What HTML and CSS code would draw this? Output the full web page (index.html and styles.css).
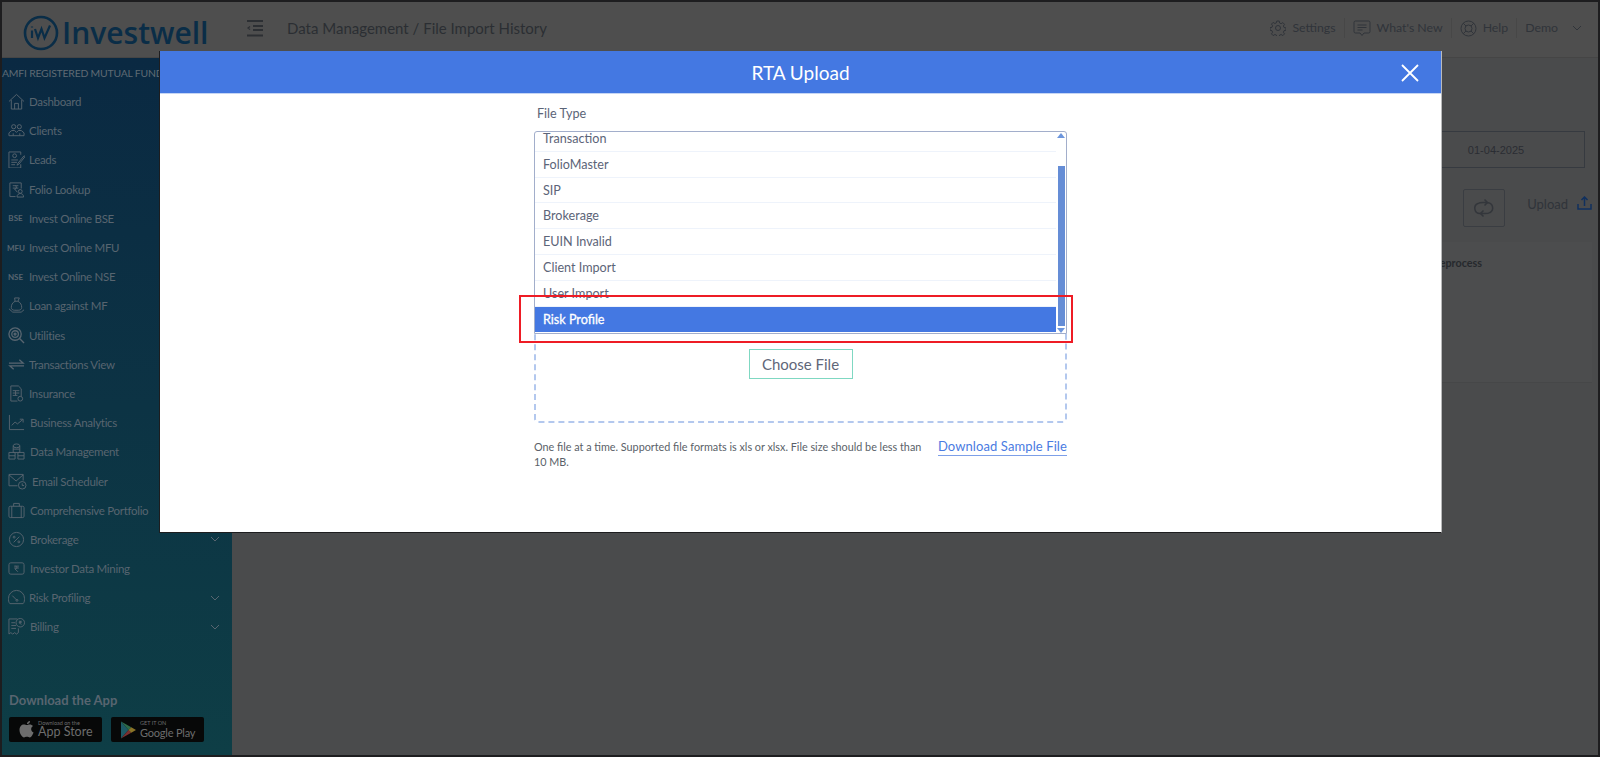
FILE: index.html
```html
<!DOCTYPE html>
<html lang="en">
<head>
  <meta charset="UTF-8" />
  <meta name="viewport" content="width=device-width, initial-scale=1" />
  <title>Investwell - File Import History</title>
  <link rel="stylesheet" href="styles.css">
</head>
<body>

  <div class="app">
    <header class="topbar">
      <div class="brand">
        <svg class="brand-mark" width="36" height="36" viewBox="0 0 36 36" fill="none" stroke="currentColor">
          <circle cx="18" cy="18" r="16" stroke-width="2.6"/>
          <path d="M9 15.500v7.500M9 11.500v1M12 14l3 9 3.500-9 3 9 5.500-12.500" stroke-width="2.200"/>
        </svg>
        <span class="brand-name">Investwell</span>
      </div>
      <svg class="menu-toggle" width="18" height="18" viewBox="0 0 18 18" fill="none" stroke="currentColor" stroke-width="2">
        <path d="M1 2h16M7 7h10M7 11h10M1 16.500h16"/>
        <path d="M4 7.500 2 9l2 1.500" stroke-width="1.200"/>
      </svg>
      <div class="crumbs">Data Management / File Import History</div>

      <nav class="top-links">
        <a class="top-link">
          <svg width="16" height="16" viewBox="0 0 16 16" fill="none" stroke="currentColor">
            <circle cx="8" cy="8" r="2.500"/>
            <path d="M6.800 1h2.400l.4 2 1.500.7 1.800-1.100 1.600 1.700-1.100 1.700.6 1.500 2 .4v2.300l-2 .5-.6 1.500 1.100 1.700-1.600 1.700-1.800-1.100-1.500.6-.4 2H6.800l-.4-2-1.500-.6-1.800 1.100-1.600-1.700 1.100-1.700-.6-1.500-2-.5V7.700l2-.4.6-1.500-1.100-1.700 1.600-1.700 1.800 1.100 1.500-.7z"/>
          </svg>
          Settings
        </a>
        <a class="top-link">
          <svg width="18" height="17" viewBox="0 0 18 17" fill="none" stroke="currentColor">
            <path d="M2.500 1h13A1.500 1.500 0 0 1 17 2.500v9a1.500 1.500 0 0 1-1.500 1.500H11l-2 2.500L7 13H2.500A1.500 1.500 0 0 1 1 11.500v-9A1.500 1.500 0 0 1 2.500 1z"/>
            <path d="M4.500 5h9M4.500 7.500h9M4.500 10h5"/>
          </svg>
          What's New
        </a>
        <a class="top-link">
          <svg width="17" height="17" viewBox="0 0 17 17" fill="none" stroke="currentColor">
            <circle cx="8.500" cy="8.500" r="7.500"/>
            <circle cx="8.500" cy="8.500" r="3.500"/>
            <path d="M3.200 3.200 6 6M13.800 3.200 11 6M3.200 13.800 6 11M13.800 13.800 11 11"/>
          </svg>
          Help
        </a>
        <a class="top-link">Demo</a>
        <svg class="top-caret" width="10" height="6" viewBox="0 0 10 6" fill="none" stroke="currentColor">
          <path d="m1 1 4 4 4-4"/>
        </svg>
      </nav>
    </header>

    <div class="below">
      <aside class="sidebar">
        <div class="amfi">AMFI REGISTERED MUTUAL FUND</div>
        <ul class="nav">
          <li class="nav-item">
            <svg class="nav-icon" viewBox="0 0 18 18"><path d="M1 9 9 1.500 17 9M3.500 7.500V17h11V7.500M7 17v-6h4v6"/></svg>
            <span>Dashboard</span>
          </li>
          <li class="nav-item">
            <svg class="nav-icon" viewBox="0 0 18 18"><circle cx="6" cy="5" r="2.200"/><circle cx="12" cy="5" r="2.200"/><path d="M1 14.500v-3l3-2.500h3l2 2 2-2h3l3 2.500v3zM5.500 14.500V12M12.500 14.500V12"/></svg>
            <span>Clients</span>
          </li>
          <li class="nav-item">
            <svg class="nav-icon" viewBox="0 0 18 18"><path d="M13.500 4V1H1v17h12.500v-4"/><circle cx="7" cy="5" r="2"/><path d="M3.500 9.500h7M3.500 12h6M3.500 14.500h4M17 5l-6.500 8-1 2 2-1L18 6z"/></svg>
            <span>Leads</span>
          </li>
          <li class="nav-item">
            <svg class="nav-icon" viewBox="0 0 18 18"><path d="M8 16.500H2V2h12v6"/><path d="M5 5h6M5 7.500h6M7.500 5c2 0 2 3.500-.5 3.500L10 12"/><circle cx="13" cy="11" r="2"/><path d="M9.500 17c0-5 7-5 7 0z"/></svg>
            <span>Folio Lookup</span>
          </li>
          <li class="nav-item"><span class="nav-tag">BSE</span><span>Invest Online BSE</span></li>
          <li class="nav-item"><span class="nav-tag">MFU</span><span>Invest Online MFU</span></li>
          <li class="nav-item"><span class="nav-tag">NSE</span><span>Invest Online NSE</span></li>
          <li class="nav-item">
            <svg class="nav-icon" viewBox="0 0 18 18"><path d="M7 1h5l-1.500 3.500c3 1.500 4 4 4 6.500 0 2-1.500 3-3.500 3H7c-2 0-3.500-1-3.500-3 0-2.500 1-5 4-6.500zM1 12.500 5 16h9l3-2.500M7.500 4.500h3"/></svg>
            <span>Loan against MF</span>
          </li>
          <li class="nav-item">
            <svg class="nav-icon nav-icon-bold" viewBox="0 0 18 18"><circle cx="7.500" cy="7.500" r="6.500"/><circle cx="7.500" cy="7.500" r="3.500"/><circle cx="7.500" cy="7.500" r="1"/><path d="m12 12 5 5"/></svg>
            <span>Utilities</span>
          </li>
          <li class="nav-item">
            <svg class="nav-icon nav-icon-bold" viewBox="0 0 18 18"><path d="M1 7.500h15L12 4M17 10.500H2l4 3.500"/></svg>
            <span>Transactions View</span>
          </li>
          <li class="nav-item">
            <svg class="nav-icon" viewBox="0 0 18 18"><path d="M10 17H3V1h8l3 3v8M5 6h7M5 8.500h7M5 11h5M8 6v5"/><circle cx="13" cy="14.500" r="2.500"/></svg>
            <span>Insurance</span>
          </li>
          <li class="nav-item nav-item-wide">
            <svg class="nav-icon" viewBox="0 0 18 18"><path d="M1.500 1v15.500H17M4 12l3.500-3.500 2.500 2L15.500 6M12.500 5.500h3.500V9"/></svg>
            <span>Business Analytics</span>
          </li>
          <li class="nav-item nav-item-wide">
            <svg class="nav-icon" viewBox="0 0 18 18"><ellipse cx="9" cy="3" rx="3.500" ry="2"/><path d="M5.500 3v7h7V3M5.500 6.500h7M1 10h6.500v7H1zM10.500 10H17v7h-6.500zM1 13.500h6.500M10.500 13.500H17"/></svg>
            <span>Data Management</span>
          </li>
          <li class="nav-item nav-item-mail">
            <svg class="nav-icon nav-icon-mail" viewBox="0 0 20 18"><path d="M10 13.500H1V1.500h15V8M1 2l7.500 6.500L16 2"/><circle cx="15" cy="13" r="4"/><path d="M15 11v2.300h2"/></svg>
            <span>Email Scheduler</span>
          </li>
          <li class="nav-item nav-item-wide">
            <svg class="nav-icon" viewBox="0 0 18 18"><rect x="1" y="4.500" width="16" height="12" rx="1.500"/><path d="M6 4.500v-3h6v3M4 4.500v12M14 4.500v12"/></svg>
            <span>Comprehensive Portfolio</span>
          </li>
          <li class="nav-item nav-item-wide">
            <svg class="nav-icon" viewBox="0 0 18 18"><circle cx="9" cy="9" r="7.500"/><path d="m6 12 6-6"/><circle cx="6.500" cy="6.500" r="1"/><circle cx="11.500" cy="11.500" r="1"/></svg>
            <span>Brokerage</span>
            <svg class="nav-caret" width="10" height="6" viewBox="0 0 10 6"><path d="m1 1 4 4 4-4"/></svg>
          </li>
          <li class="nav-item nav-item-wide">
            <svg class="nav-icon" viewBox="0 0 18 18"><rect x="1" y="3" width="16" height="12" rx="2"/><path d="M6.500 6.500h5M6.500 8.500h5M8 6.500c2 0 2 3-.5 3l3 3"/></svg>
            <span>Investor Data Mining</span>
          </li>
          <li class="nav-item">
            <svg class="nav-icon" viewBox="0 0 18 18"><path d="M2 15.500C.5 14 .5 11.500.5 10a8.500 8.500 0 0 1 17 0c0 1.500 0 4-1.500 5.500zM4.500 7 9 11.500"/><circle cx="9.500" cy="12" r="1"/></svg>
            <span>Risk Profiling</span>
            <svg class="nav-caret" width="10" height="6" viewBox="0 0 10 6"><path d="m1 1 4 4 4-4"/></svg>
          </li>
          <li class="nav-item nav-item-wide">
            <svg class="nav-icon" viewBox="0 0 18 18"><path d="M10 1H1v16l2-1.500 2 1.500 2-1.500 2 1.500 2-1.500V11M3.500 5h4M3.500 8h5M3.500 11h5"/><circle cx="13" cy="5" r="4.500"/><path d="M11.500 3.500h3M11.500 5h3M12.500 3.500c1.500 0 1.500 1.500-.5 1.500l2 2"/></svg>
            <span>Billing</span>
            <svg class="nav-caret" width="10" height="6" viewBox="0 0 10 6"><path d="m1 1 4 4 4-4"/></svg>
          </li>
        </ul>

        <div class="apps">
          <div class="apps-title">Download the App</div>
          <div class="apps-row">
            <div class="store">
              <svg width="15" height="17" viewBox="0 0 15 17" fill="currentColor">
                <path d="M11 0c.1 1.800-1.500 3.300-3.100 3.100C7.800 1.500 9.400.1 11 0zM7.800 4.100c.8 0 1.700-.7 3-.7 1.300 0 2.500.6 3.200 1.700-2.700 1.600-2.300 5.300.6 6.500-.8 2-2.200 4.900-3.800 4.900-1.100 0-1.500-.7-2.900-.7-1.400 0-1.900.7-2.900.7C3.200 16.500.5 12.500.5 9c0-3.500 2.200-5.500 4.300-5.500 1.200 0 2.300.6 3 .6z"/>
              </svg>
              <div class="store-text"><small>Download on the</small><b>App Store</b></div>
            </div>
            <div class="store store-play">
              <svg width="15" height="18" viewBox="0 0 16 18">
                <path d="M0 0v18l8-9z" fill="#1d5a66"/>
                <path d="M0 0l8 9 3-3z" fill="#2d6a48"/>
                <path d="M0 18l8-9 3 3z" fill="#7a3030"/>
                <path d="M11 6l5 3-5 3-3-3z" fill="#8a7428"/>
              </svg>
              <div class="store-text"><small>GET IT ON</small><b>Google Play</b></div>
            </div>
          </div>
        </div>
      </aside>

      <main class="content">
        <div class="date-box">01-04-2025</div>
        <div class="actions">
          <div class="sync-btn">
            <svg width="22" height="20" viewBox="0 0 22 20" fill="none" stroke="currentColor" stroke-width="1.500">
              <path d="M8 15.500H7A5.200 5.200 0 0 1 5 5.500C7 4 10 4.500 14 4.500M11.500 1.500l3 3-3 3"/>
              <path d="M14 4.800h1a5.200 5.200 0 0 1 2 9.700c-2 1.500-5 1-9 1M10.500 12.500l-3 3 3 3"/>
            </svg>
          </div>
          <div class="upload">
            Upload
            <svg width="15" height="14" viewBox="0 0 15 14" fill="none" stroke="currentColor" stroke-width="1.500">
              <path d="M1 8v5h13V8M7.500 10V1M4.500 4l3-3 3 3"/>
            </svg>
          </div>
        </div>
        <div class="panel">
          <div class="panel-head">Reprocess</div>
        </div>
      </main>
    </div>
  </div>

  <div class="overlay">
    <section class="modal">
      <div class="modal-head">
        RTA Upload
        <svg class="modal-close" width="18" height="18" viewBox="0 0 18 18" fill="none" stroke="#fff" stroke-width="1.800">
          <path d="m1 1 16 16M17 1 1 17"/>
        </svg>
      </div>
      <div class="modal-body">
        <label class="field-label">File Type</label>
        <div class="dropzone">
          <div class="picker">
            <ul class="picker-list">
              <li>Transaction</li>
              <li>FolioMaster</li>
              <li>SIP</li>
              <li>Brokerage</li>
              <li>EUIN Invalid</li>
              <li>Client Import</li>
              <li>User Import</li>
              <li class="selected">Risk Profile</li>
            </ul>
            <div class="picker-scroll">
              <span class="arrow-up"></span>
              <span class="thumb"></span>
              <span class="arrow-down"></span>
            </div>
          </div>
          <button class="choose-btn" type="button">Choose File</button>
        </div>
        <div class="help-row">
          <p class="help-text">One file at a time. Supported file formats is xls or xlsx. File size should be less than 10 MB.</p>
          <a class="sample-link">Download Sample File</a>
        </div>
      </div>
    </section>
    <div class="callout"></div>
  </div>

</body>
</html>
```

FILE: styles.css
```css
/* Reset */
* {
  margin: 0;
  padding: 0;
  box-sizing: border-box;
}
html, body {
  height: 757px;
  overflow: hidden;
}
body {
  background: #4a4b4c;
  font-family: Lato, 'Open Sans', sans-serif;
  color: #2f3338;
}
ul {
  list-style: none;
}
.app {
  height: 757px;
  display: flex;
  flex-direction: column;
  border: 2px solid #1d1d1f;
}

/* Top bar */
.topbar {
  height: 56px;
  flex: none;
  display: flex;
  align-items: center;
  background: #4e4e4e;
  border-bottom: 1px solid #454545;
}
.brand {
  width: 230px;
  margin-top: 6px;
  padding-left: 21px;
  display: flex;
  align-items: center;
  color: #0a2d47;
}
.brand-mark {
  flex: none;
}
.brand-name {
  font-family: 'Open Sans', Lato, sans-serif;
  font-size: 30px;
  font-weight: 600;
  line-height: 36px;
  margin-left: 3px;
}
.menu-toggle {
  margin: 0 0 3px 14px;
  color: #2c2f33;
}
.crumbs {
  margin: 0 0 3px 23px;
  font-size: 15px;
  color: #2b2e33;
}
.top-links {
  margin: 0 0 3px auto;
  display: flex;
  align-items: center;
  padding-right: 16px;
}
.top-link {
  display: flex;
  align-items: center;
  gap: 6px;
  font-size: 12.300px;
  color: #30343a;
  padding: 0 8px;
  border-right: 1px solid #474747;
  line-height: 20px;
}
.top-link:nth-child(4) {
  border-right: none;
}
.top-caret {
  margin-left: 6px;
  color: #30343a;
}

/* Sidebar */
.below {
  flex: 1;
  display: flex;
  min-height: 0;
}
.sidebar {
  width: 230px;
  flex: none;
  background: linear-gradient(180deg, #0a2942 0%, #0c3344 50%, #0e3e46 100%);
  color: #586570;
  display: flex;
  flex-direction: column;
}
.amfi {
  font-size: 10.400px;
  letter-spacing: -0.2px;
  line-height: 14px;
  margin-top: 8px;
  white-space: nowrap;
  color: #5f6b74;
}
.nav {
  margin-top: 7px;
}
.nav-item {
  height: 29.200px;
  display: flex;
  align-items: center;
  padding: 0 12px 0 6px;
  font-size: 11.500px;
  letter-spacing: -0.3px;
  white-space: nowrap;
}
.nav-item > span:not(.nav-tag) {
  margin-left: 4px;
}
.nav-item-wide > span:not(.nav-tag) {
  margin-left: 5px;
}
.nav-item-mail > span:not(.nav-tag) {
  margin-left: 5px;
}
.nav-icon {
  width: 17px;
  height: 17px;
  flex: none;
  fill: none;
  stroke: currentColor;
  stroke-width: 1;
}
.nav-icon-bold {
  stroke-width: 1.400;
}
.nav-icon-mail {
  width: 19px;
}
.nav-tag {
  width: 17px;
  margin-left: -1px;
  margin-right: 1px;
  font-size: 8px;
  font-weight: 700;
  letter-spacing: 0;
  flex: none;
  text-align: center;
}
.nav-caret {
  margin-left: auto;
  fill: none;
  stroke: currentColor;
}
.apps {
  margin-top: auto;
  padding: 0 0 13px 7px;
}
.apps-title {
  font-size: 13px;
  font-weight: 700;
  line-height: 16px;
  margin-bottom: 1px;
  color: #586570;
}
.apps-row {
  display: flex;
  gap: 9px;
  margin-top: 9px;
}
.store {
  width: 93px;
  height: 25px;
  background: #070808;
  border-radius: 2px;
  display: flex;
  align-items: center;
  gap: 4px;
  padding-left: 10px;
  color: #6d6d6d;
}
.store-text {
  display: flex;
  flex-direction: column;
  line-height: 1;
  white-space: nowrap;
}
.store-text small {
  font-size: 5.500px;
}
.store-text b {
  font-size: 12.500px;
  font-weight: 400;
}
.store-play .store-text b {
  font-size: 11px;
  letter-spacing: -0.2px;
}

/* Page behind the modal */
.content {
  flex: 1;
  min-width: 0;
  padding: 73px 6px 0 0;
  display: flex;
  flex-direction: column;
  align-items: flex-end;
}
.date-box {
  width: 178px;
  height: 37px;
  margin-right: 7px;
  border: 1px solid #363a40;
  display: flex;
  align-items: center;
  justify-content: center;
  font-family: 'Liberation Sans', Arial, sans-serif;
  font-size: 11px;
  color: #2a2d33;
}
.actions {
  margin-top: 21px;
  display: flex;
  align-items: flex-start;
}
.sync-btn {
  width: 42px;
  height: 38px;
  border: 1px solid #3a3d42;
  border-radius: 2px;
  display: flex;
  align-items: center;
  justify-content: center;
  color: #33363b;
}
.upload {
  margin-left: 22px;
  margin-top: 5px;
  display: flex;
  align-items: flex-start;
  gap: 9px;
  font-size: 13px;
  line-height: 20px;
  color: #30343a;
}
.upload svg {
  color: #10305e;
  margin-top: 2px;
}
.panel {
  width: 100%;
  height: 141px;
  margin-top: 15px;
  background: #4c4d4e;
  border-bottom: 1px solid #464748;
}
.panel-head {
  height: 44px;
  padding-right: 110px;
  text-align: right;
  font-size: 10.800px;
  font-weight: 700;
  line-height: 42px;
  color: #26292d;
}

/* Modal */
.overlay {
  position: fixed;
  top: 0;
  left: 0;
  width: 1600px;
  height: 757px;
}
.modal {
  width: 1283px;
  height: 482px;
  margin: 51px 0 0 159px;
  background: #fff;
  border-left: 1px solid #1d1d1f;
  border-right: 1px solid #b9babb;
  border-bottom: 1px solid #1d1d1f;
}
.modal-head {
  height: 43px;
  background: #4478e2;
  border-bottom: 1px solid #c5d5f4;
  color: #fff;
  font-size: 19px;
  line-height: 44px;
  text-align: center;
  position: relative;
}
.modal-close {
  position: absolute;
  top: 13px;
  right: 22px;
}
.modal-body {
  width: 533px;
  margin: 0 auto;
}
.field-label {
  display: block;
  font-size: 12.600px;
  line-height: 18px;
  margin: 11px 0 0 3px;
  color: #5b6477;
}
.dropzone {
  position: relative;
  height: 292px;
  margin-top: 8px;
  border: 2px dashed #b3c8ee;
  border-radius: 4px;
  text-align: center;
  padding-top: 216px;
}
.picker {
  position: absolute;
  top: -2px;
  left: -2px;
  right: -2px;
  height: 203px;
  display: flex;
  background: #fff;
  border: 1px solid #a2aecb;
  border-radius: 3px 3px 0 0;
  overflow: hidden;
}
.picker-list {
  flex: 1;
  margin-top: -6px;
  text-align: left;
  font-size: 12.600px;
  color: #5c6478;
}
.picker-list li {
  height: 25.800px;
  line-height: 25px;
  padding-left: 8px;
  border-bottom: 1.500px solid #eef3fb;
}
.picker-list .selected {
  background: #4478e2;
  color: #fff;
  -webkit-text-stroke: 0.3px #fff;
  border-bottom: none;
}
.picker-scroll {
  width: 10px;
  flex: none;
  display: flex;
  flex-direction: column;
  align-items: center;
  padding-top: 1px;
}
.arrow-up, .arrow-down {
  width: 0;
  height: 0;
  flex: none;
  border-left: 4px solid transparent;
  border-right: 4px solid transparent;
}
.arrow-up {
  border-bottom: 5px solid #6d96dd;
}
.arrow-down {
  border-top: 5px solid #6d96dd;
  margin-top: 2px;
}
.thumb {
  width: 7px;
  height: 160px;
  flex: none;
  margin-top: 28px;
  background: #658dd6;
}
.choose-btn {
  width: 104px;
  height: 30px;
  background: #fff;
  border: 1.500px solid #7fd8c2;
  font-family: inherit;
  font-size: 15px;
  color: #5f6779;
}
.help-row {
  display: flex;
  justify-content: space-between;
  align-items: flex-start;
  margin-top: 16px;
}
.help-text {
  width: 395px;
  font-size: 10.800px;
  line-height: 15px;
  color: #5a5f68;
}
.sample-link {
  font-size: 13px;
  line-height: 15px;
  color: #4a7be2;
  border-bottom: 1px solid #7d9fe8;
  padding-bottom: 1px;
  letter-spacing: 0.1px;
}

/* Red annotation drawn on the screenshot */
.callout {
  position: absolute;
  top: 295px;
  left: 519px;
  width: 554px;
  height: 48px;
  border: 2px solid #ee1c25;
}
```
